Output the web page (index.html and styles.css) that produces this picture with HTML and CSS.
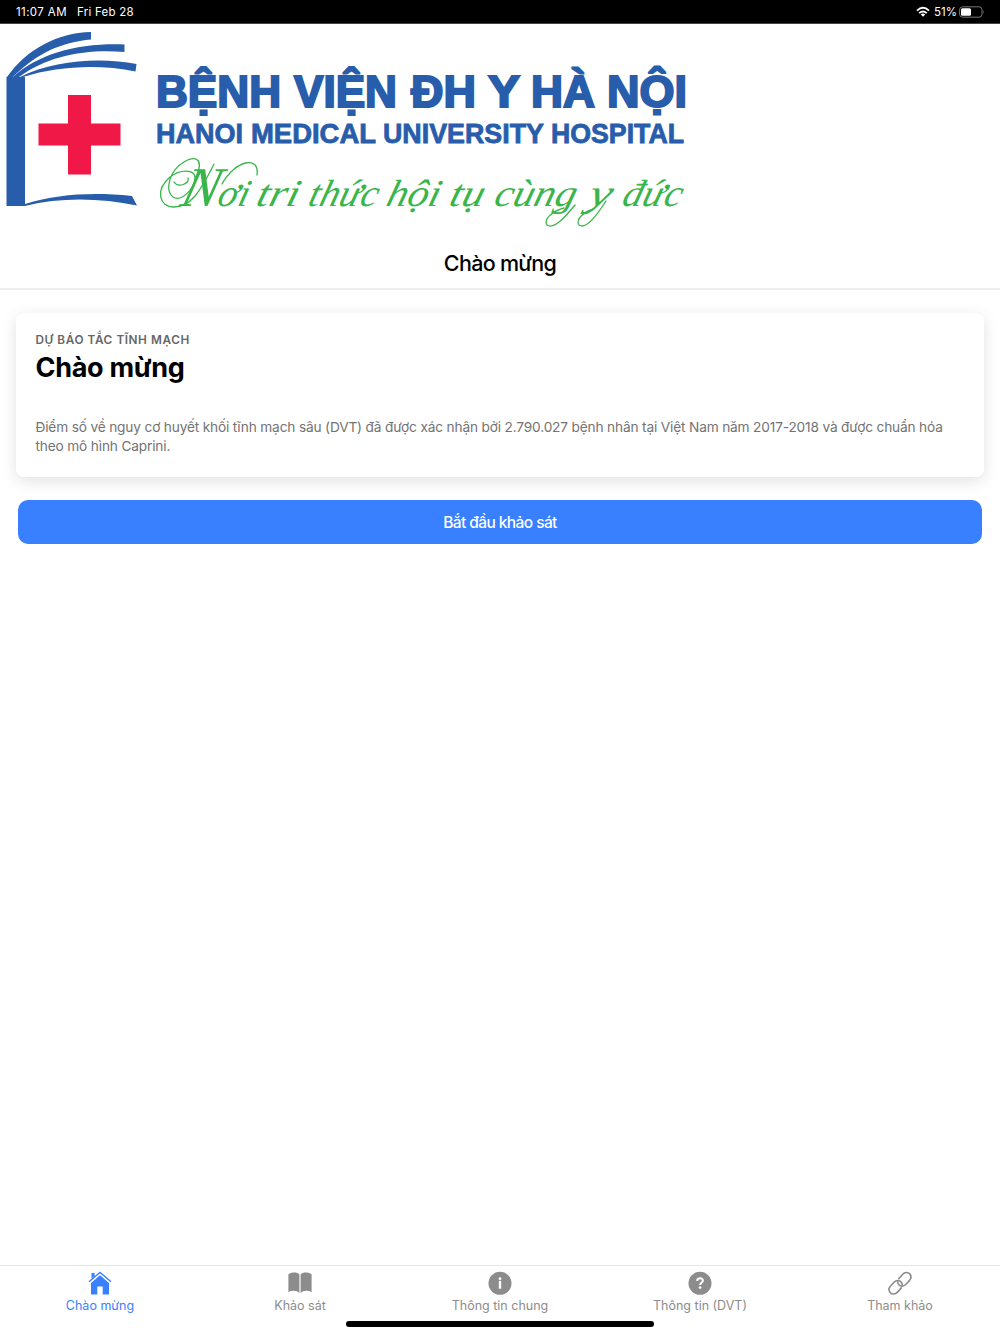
FILE: index.html
```html
<!DOCTYPE html>
<html lang="vi">
<head>
<meta charset="utf-8">
<title>Chào mừng</title>
<link rel="stylesheet" href="styles.css">
</head>
<body>
<div class="status">
  <span class="time">11:07 AM</span><span class="date">Fri Feb 28</span>
  <svg class="wifi" width="14" height="12" viewBox="0 0 14 12" fill="none" stroke="#fff" stroke-width="1.9"><path d="M1 4.6Q7-.9 13 4.6M3.2 7.1Q7 3.7 10.8 7.1"/><path d="M4.8 8.4Q7 6.6 9.2 8.4L7 10.8Z" fill="#fff" stroke="none"/></svg>
  <span class="percent">51%</span>
  <svg class="battery" width="26" height="12" viewBox="0 0 26 12"><rect x=".6" y=".8" width="22.4" height="10.4" rx="3" fill="none" stroke="#777"/><rect x="2" y="2.2" width="10" height="7.6" rx="1.5" fill="#fff"/><path d="M24.3 4.3q1.6 1.7 0 3.4z" fill="#777"/></svg>
</div>
<header class="banner">
  <svg class="logo" width="700" height="214" viewBox="0 24 700 214" role="img" aria-label="Bệnh viện Đại học Y Hà Nội">
    <g fill="#285dab">
      <path d="M6.5 77H25V206H6.5Z"/>
      <path d="M7 77C27 49 57 33 91 32V39.500C61 42 36 54 13 77Z"/>
      <path d="M13 77C40 53 78 43 124.500 44.500V52C87 49 49 55 19 77Z"/>
      <path d="M20 77C54 60 101 57 136.500 64L135.500 71.500C99 64 58 66 23 77Z"/>
      <path d="M25 204C58 194 92 192 132 196L137 205.500C100 198 61 197 25 206Z"/>
    </g>
    <path fill="#ef1846" d="M68 95H91V123.500H120.500V145.500H91V174.500H68V145.500H38.500V123.500H68Z"/>
    <g class="name">
      <text x="156" y="106.500" textLength="125" lengthAdjust="spacingAndGlyphs">BỆNH</text>
      <text x="294" y="106.500" textLength="103" lengthAdjust="spacingAndGlyphs">VIỆN</text>
      <text x="411" y="106.500" textLength="65" lengthAdjust="spacingAndGlyphs">ĐH</text>
      <text x="488" y="106.500" textLength="32" lengthAdjust="spacingAndGlyphs">Y</text>
      <text x="531" y="106.500" textLength="64" lengthAdjust="spacingAndGlyphs">HÀ</text>
      <text x="607" y="106.500" textLength="80" lengthAdjust="spacingAndGlyphs">NỘI</text>
    </g>
    <g class="english">
      <text x="156" y="143" textLength="87" lengthAdjust="spacingAndGlyphs">HANOI</text>
      <text x="251" y="143" textLength="125" lengthAdjust="spacingAndGlyphs">MEDICAL</text>
      <text x="383" y="143" textLength="161" lengthAdjust="spacingAndGlyphs">UNIVERSITY</text>
      <text x="551" y="143" textLength="133" lengthAdjust="spacingAndGlyphs">HOSPITAL</text>
    </g>
    <g class="motto" transform="translate(53 0) skewX(-15)">
      <text x="181" y="206" textLength="68" lengthAdjust="spacingAndGlyphs"><tspan class="initial">N</tspan>ơi</text>
      <text x="257" y="206" textLength="42" lengthAdjust="spacingAndGlyphs">tri</text>
      <text x="309" y="206" textLength="69" lengthAdjust="spacingAndGlyphs">thức</text>
      <text x="387" y="206" textLength="53" lengthAdjust="spacingAndGlyphs">hội</text>
      <text x="450" y="206" textLength="34" lengthAdjust="spacingAndGlyphs">tụ</text>
      <text x="495" y="206" textLength="81" lengthAdjust="spacingAndGlyphs">cùng</text>
      <text x="589" y="206" textLength="23" lengthAdjust="spacingAndGlyphs">y</text>
      <text x="623" y="206" textLength="59" lengthAdjust="spacingAndGlyphs">đức</text>
    </g>
    <g fill="none" stroke="#39b54a" stroke-width="1.300" stroke-linecap="round">
      <path d="M196 177C205 157 194 156 184 162C170 170 164 190 173 197C181 202 194 190 195 178C195 169 180 169 170 177C155 190 159 207 174 207C190 207 199 194 214 164"/>
      <path d="M174 182C178 188 190 184 188 178M222 184C235 160 260 155 257 175"/>
      <path d="M564 208C553 211 543 219 547 225C554 230 566 216 575 205M594 209C585 211 575 219 579 225C586 230 597 215 606 201"/>
    </g>
  </svg>
</header>
<div class="titlebar"><span>Chào mừng</span></div>
<main>
  <section class="card">
    <div class="subtitle">DỰ BÁO TẮC TĨNH MẠCH</div>
    <h1>Chào mừng</h1>
    <p>Điểm số về nguy cơ huyết khối tĩnh mạch sâu (DVT) đã được xác nhận bởi 2.790.027 bệnh nhân tại Việt Nam năm 2017-2018 và được chuẩn hóa<br>theo mô hình Caprini.</p>
  </section>
  <button class="start"><span>Bắt đầu khảo sát</span></button>
</main>
<nav class="tabs">
  <a class="tab active"><svg width="24" height="24" viewBox="0 0 24 24" fill="currentColor"><path d="M12 4.200 21 12V23.500H14.700V15.500H9.300V23.500H3V12Z"/><path d="M3.500 2H6.600V5L3.500 7.700Z"/><path d="M1 10.800 12 1.400 23 10.800" fill="none" stroke="currentColor" stroke-width="1.500"/><path d="M2 11.600 12 3.100 22 11.600" fill="none" stroke="#fff" stroke-width=".7"/></svg><span>Chào mừng</span></a>
  <a class="tab"><svg width="24" height="24" viewBox="0 0 24 24" fill="currentColor"><path d="M.4 3.200C3.600.8 9.200.8 11.400 3.400V22C9 19.300 3.700 19.200.4 21.300Z"/><path d="M23.600 3.200C20.400.8 14.800.8 12.600 3.400V22C15 19.300 20.300 19.200 23.600 21.300Z"/></svg><span>Khảo sát</span></a>
  <a class="tab"><svg width="24" height="24" viewBox="0 0 24 24"><circle cx="12" cy="12.300" r="11.500" fill="currentColor"/><path d="M10.800 9.800H13.200V17.700H10.800Z" fill="#fff"/><circle cx="12" cy="7.700" r="1.350" fill="#fff"/></svg><span>Thông tin chung</span></a>
  <a class="tab"><svg width="24" height="24" viewBox="0 0 24 24"><circle cx="12" cy="12.300" r="11.500" fill="currentColor"/><path d="M9.200 9.900C9.200 6.400 14.900 6.400 14.900 9.600C14.900 11.600 12.100 11.400 12.100 14.100" fill="none" stroke="#fff" stroke-width="2"/><circle cx="12.100" cy="16.600" r="1.300" fill="#fff"/></svg><span>Thông tin (DVT)</span></a>
  <a class="tab"><svg width="24" height="24" viewBox="0 0 24 24" fill="none" stroke="currentColor" stroke-width="1.600" stroke-linecap="round"><path d="M10.700 7.700 14.500 3.500C16.800 1 20 1 21.700 2.900C23.500 4.900 23.200 7.700 21.200 9.900L18 13.300C15.800 15.600 12.700 15.700 10.900 13.700C10.200 12.900 9.700 11.900 9.700 10.900"/><path d="M13.300 16.900 9.500 21.100C7.200 23.600 4 23.600 2.300 21.700C.5 19.700.8 16.900 2.800 14.700L6 11.300C8.200 9 11.300 8.900 13.100 10.900C13.800 11.700 14.300 12.700 14.300 13.700"/></svg><span>Tham khảo</span></a>
</nav>
<div class="home"></div>
</body>
</html>
```
FILE: styles.css
```css
* { box-sizing: border-box; }
body {
  margin: 0;
  width: 1000px;
  height: 1334px;
  display: flex;
  flex-direction: column;
  overflow: hidden;
  background: #fff;
  color: #000;
  font-family: Inter, "Noto Sans", sans-serif;
}
.status {
  height: 24px;
  flex: none;
  display: flex;
  align-items: center;
  padding: 0 15px 0 16px;
  border-bottom: 1px solid #444;
  background: #000;
  color: #fff;
  font-size: 11.5px;
  letter-spacing: .4px;
  white-space: nowrap;
}
.date { margin-left: 10px; letter-spacing: .25px; }
.wifi { margin-left: auto; }
.percent { margin: 0 2px 0 4px; letter-spacing: 0; }
.banner { height: 214px; flex: none; }
.logo { display: block; }
.name, .english {
  font-family: "Liberation Sans", Arial, sans-serif;
  font-weight: 700;
  fill: #285dab;
  stroke: #285dab;
}
.name { font-size: 44px; stroke-width: 2px; }
.english { font-size: 27px; stroke-width: .8px; }
.motto {
  font-family: "Liberation Serif", "Times New Roman", serif;
  font-size: 38px;
  font-style: italic;
  fill: #39b54a;
}
.initial { font-size: 56px; }
.titlebar {
  height: 52px;
  flex: none;
  display: flex;
  align-items: center;
  justify-content: center;
  border-bottom: 2px solid #eee;
  font-size: 21.5px;
  font-weight: 500;
  letter-spacing: -.7px;
}
main { flex: 1; padding: 23px 16px 0; }
.card {
  height: 164px;
  padding: 19px 20px 19px 19.5px;
  border-radius: 8px;
  background: #fff;
  box-shadow: 0 4px 16px rgba(0, 0, 0, .12);
}
.subtitle {
  height: 16px;
  line-height: 16px;
  color: #666;
  font-size: 11.8px;
  font-weight: 600;
  letter-spacing: .57px;
}
h1 {
  margin: 3px 0 0;
  height: 34px;
  line-height: 33px;
  font-size: 27px;
  font-weight: 700;
  letter-spacing: -.3px;
}
p {
  margin: 33px 0 0;
  color: #737373;
  font-size: 13.7px;
  line-height: 18.6px;
  letter-spacing: -.168px;
  white-space: nowrap;
}
.start {
  display: flex;
  align-items: center;
  justify-content: center;
  width: 964px;
  height: 44px;
  margin: 23px 2px 0;
  padding: 0;
  border: 0;
  border-radius: 10px;
  background: #3880ff;
  color: #fff;
  font: 500 15.5px Inter, sans-serif;
  letter-spacing: -.58px;
}
.tabs {
  height: 56px;
  flex: none;
  display: grid;
  grid-template-columns: repeat(5, 1fr);
  border-top: 1px solid #e5e5e5;
}
.tab {
  display: flex;
  flex-direction: column;
  align-items: center;
  padding-top: 5px;
  color: #8c8c8c;
  font-size: 12.5px;
  line-height: 16px;
  letter-spacing: 0;
}
.tab span { margin-top: 3px; }
.active { color: #3880ff; }
.home {
  flex: none;
  width: 308px;
  height: 6px;
  margin: 0 auto 7px;
  border-radius: 3px;
  background: #000;
}
```
